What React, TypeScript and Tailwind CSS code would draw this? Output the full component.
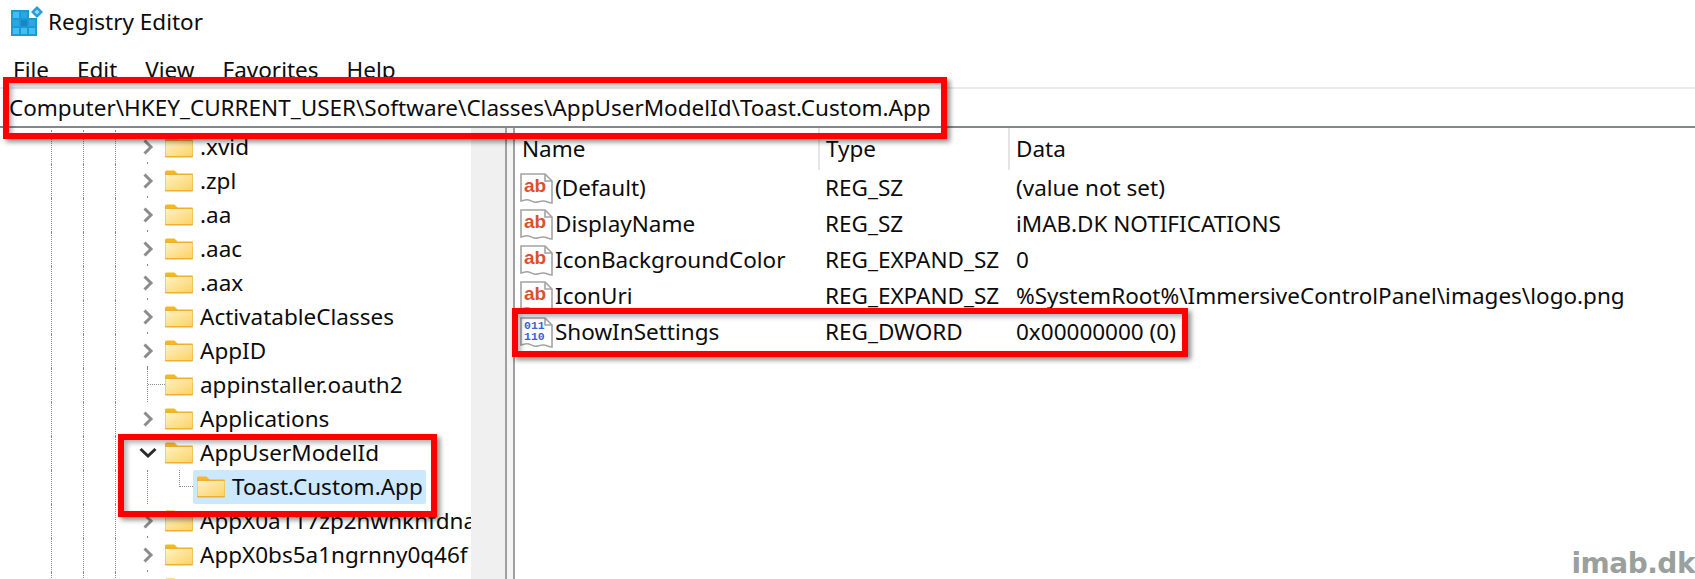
const folderRows = [
  { label: '.xvid', chevron: 'right' },
  { label: '.zpl', chevron: 'right' },
  { label: '.aa', chevron: 'right' },
  { label: '.aac', chevron: 'right' },
  { label: '.aax', chevron: 'right' },
  { label: 'ActivatableClasses', chevron: 'right' },
  { label: 'AppID', chevron: 'right' },
  { label: 'appinstaller.oauth2', chevron: 'none' },
  { label: 'Applications', chevron: 'right' },
  { label: 'AppUserModelId', chevron: 'down' },
  { label: 'Toast.Custom.App', chevron: 'child' },
  { label: 'AppX0a117zp2hwhknfdna', chevron: 'right' },
  { label: 'AppX0bs5a1ngrnny0q46f', chevron: 'right' },
  { label: '', chevron: 'right' },
];

const values = [
  { name: '(Default)', type: 'REG_SZ', data: '(value not set)', binary: false },
  { name: 'DisplayName', type: 'REG_SZ', data: 'iMAB.DK NOTIFICATIONS', binary: false },
  { name: 'IconBackgroundColor', type: 'REG_EXPAND_SZ', data: '0', binary: false },
  { name: 'IconUri', type: 'REG_EXPAND_SZ', data: '%SystemRoot%\\ImmersiveControlPanel\\images\\logo.png', binary: false },
  { name: 'ShowInSettings', type: 'REG_DWORD', data: '0x00000000 (0)', binary: true },
];

function AppIcon() {
  return (
    <svg width="33" height="32" viewBox="0 0 33 32" className="shrink-0">
      <rect x="0" y="4" width="26" height="26" fill="#1c9ad6" />
      <g fill="#43bdf2">
        <rect x="2" y="6" width="6" height="6" />
        <rect x="10" y="6" width="6" height="6" fill="#2aa7e2" />
        <rect x="2" y="14" width="6" height="6" fill="#2aa7e2" />
        <rect x="10" y="14" width="6" height="6" fill="#1587c4" />
        <rect x="18" y="14" width="6" height="6" fill="#2aa7e2" />
        <rect x="2" y="22" width="6" height="6" />
        <rect x="10" y="22" width="6" height="6" />
        <rect x="18" y="22" width="6" height="6" />
      </g>
      <rect x="18" y="4" width="8" height="8" fill="#fff" />
      <path d="M26 0l6 6-6 6-6-6z" fill="#2a9bd4" />
      <path d="M26 3.500l2.500 2.500-2.500 2.500-2.500-2.500z" fill="#8fdcf8" />
    </svg>
  );
}

function Folder() {
  return (
    <svg width="28" height="22" viewBox="0 0 28 22" className="shrink-0">
      <defs>
        <linearGradient id="folderBody" x1="0" y1="0" x2="1" y2="1">
          <stop offset="0" stopColor="#fff2c4" />
          <stop offset="1" stopColor="#fcd265" />
        </linearGradient>
      </defs>
      <path d="M0 2a1.500 1.500 0 0 1 1.500-1.500h8l3 3v3H0z" fill="#f6b81e" />
      <rect x="0" y="3.500" width="28" height="18" rx="1" fill="#eeb032" />
      <rect x="0.500" y="5" width="27" height="15" fill="url(#folderBody)" />
    </svg>
  );
}

function Chevron({ down }: { down?: boolean }) {
  if (down) {
    return (
      <svg width="18" height="18" viewBox="0 0 18 18">
        <path d="M1.500 5l7.500 7 7.500-7" fill="none" stroke="#2b2b2b" strokeWidth="3" />
      </svg>
    );
  }
  return (
    <svg width="14" height="18" viewBox="0 0 14 18">
      <path d="M3.500 2.500l6.500 6.500-6.500 6.500" fill="none" stroke="#8c8c8c" strokeWidth="3" />
    </svg>
  );
}

function ValueIcon({ binary }: { binary: boolean }) {
  return (
    <svg width="33" height="33" viewBox="0 0 33 33" className="shrink-0">
      <path
        d="M1 2h24l7 7v22c-4 0-5-2-9-2s-6 2-9 1-6-3-9-2l-4 1z"
        fill="#fff"
        stroke="#a3a3a3"
        strokeWidth="1.600"
      />
      <path d="M25 2v7h7" fill="none" stroke="#a3a3a3" strokeWidth="1.600" />
      {binary ? (
        <g fontFamily="'Liberation Mono', monospace" fontSize="11.500" fontWeight="700" fill="#3b62d6">
          <text x="4" y="13">011</text>
          <text x="4" y="24">110</text>
        </g>
      ) : (
        <text x="4" y="20" fontFamily="'Liberation Sans', sans-serif" fontSize="19" fontWeight="700" fill="#de4f2d">
          ab
        </text>
      )}
    </svg>
  );
}

function Guides() {
  return (
    <div className="flex h-full shrink-0 pl-[51px]">
      <div className="h-full w-[32px] border-l border-dotted border-[#8a8a8a]" />
      <div className="h-full w-[32px] border-l border-dotted border-[#8a8a8a]" />
      <div className="h-full w-[16px] border-l border-dotted border-[#8a8a8a]" />
    </div>
  );
}

function TreeRow({ label, chevron }: { label: string; chevron: string }) {
  return (
    <div className="flex h-[34px] shrink-0 items-center">
      <Guides />
      <div className="relative flex h-full w-[34px] shrink-0 items-center justify-center">
        {chevron === 'right' && <Chevron />}
        {chevron === 'down' && <Chevron down />}
        {chevron === 'none' && (
          <div className="absolute top-0 left-[16px] h-full w-[18px] border-l border-dotted border-[#8a8a8a]">
            <div className="mt-[16px] w-full border-t border-dotted border-[#8a8a8a]" />
          </div>
        )}
        {chevron === 'child' && <div className="absolute top-0 left-[16px] h-full border-l border-dotted border-[#8a8a8a]" />}
        {chevron === 'right' && <div className="absolute bottom-0 left-[16px] h-[2px] w-px bg-[#8a8a8a]" />}
      </div>
      {chevron === 'child' ? (
        <>
          <div className="h-full w-[28px] shrink-0 pl-[14px]">
            <div className="h-[17px] w-[14px] border-b border-l border-dotted border-[#8a8a8a]" />
          </div>
          <div className="flex h-[34px] w-[233px] items-center rounded-[2px] bg-[#cce8ff] pl-[4px]">
            <Folder />
            <span className="pl-[7px]">{label}</span>
          </div>
        </>
      ) : (
        <>
          <Folder />
          <span className="pl-[7px] whitespace-nowrap">{label}</span>
        </>
      )}
    </div>
  );
}

function Highlight({ className }: { className: string }) {
  return (
    <div
      className={`absolute border-[6px] border-[#fe0000] shadow-[3px_3px_5px_rgba(0,0,0,0.45),inset_3px_3px_5px_rgba(0,0,0,0.3)] ${className}`}
    />
  );
}

export default function App() {
  return (
    <div className="relative h-[579px] w-[1695px] overflow-hidden bg-white font-['Noto_Sans',sans-serif] text-[22.5px] text-[#0c0c0c]">
      {/* Title bar */}
      <div className="flex h-[44px] items-center gap-[4px] pl-[11px]">
        <AppIcon />
        <span className="text-[22.5px]">Registry Editor</span>
      </div>

      {/* Menu */}
      <div className="flex h-[43px] items-center gap-[28px] pt-[8px] pl-[13px]">
        <span>File</span>
        <span>Edit</span>
        <span>View</span>
        <span>Favorites</span>
        <span>Help</span>
      </div>

      {/* Address bar */}
      <div className="flex h-[41px] items-center border-t-2 border-b-2 border-t-[#ebebeb] border-b-[#85888a] pl-[9px]">
        Computer\HKEY_CURRENT_USER\Software\Classes\AppUserModelId\Toast.Custom.App
      </div>

      <div className="flex h-[451px]">
        {/* Tree */}
        <div className="flex w-[471px] shrink-0 flex-col overflow-hidden pt-[2px]">
          {folderRows.map((row) => (
            <TreeRow key={row.label} label={row.label} chevron={row.chevron} />
          ))}
        </div>
        <div className="w-[34px] shrink-0 bg-[#f0f0f0]" />
        <div className="w-[10px] shrink-0 border-x-2 border-x-[#a0a0a0] bg-[#f4f4f4]" />

        {/* Values */}
        <div className="flex-1">
          <div className="flex h-[42px] items-center">
            <div className="flex h-full w-[303px] items-center pl-[7px]">Name</div>
            <div className="flex h-full w-[190px] items-center border-l-2 border-l-[#e5e5e5] pl-[6px]">Type</div>
            <div className="flex h-full items-center border-l-2 border-l-[#e5e5e5] pl-[6px]">Data</div>
          </div>
          {values.map((v) => (
            <div key={v.name} className="flex h-[36px] items-center">
              <div className="flex w-[303px] items-center pl-[5px]">
                <ValueIcon binary={v.binary} />
                <span className="pl-[2px]">{v.name}</span>
              </div>
              <div className="w-[190px] pl-[7px]">{v.type}</div>
              <div className="pl-[8px] whitespace-nowrap">{v.data}</div>
            </div>
          ))}
        </div>
      </div>

      <Highlight className="top-[77px] left-[3px] h-[62px] w-[944px]" />
      <Highlight className="top-[434px] left-[118px] h-[83px] w-[319px]" />
      <Highlight className="top-[308px] left-[512px] h-[49px] w-[676px]" />

      <div className="absolute right-0 bottom-0 font-['DejaVu_Sans',sans-serif] text-[28px] leading-[30px] font-bold tracking-[-0.5px] text-[#9aa09e]">
        imab.dk
      </div>
    </div>
  );
}
